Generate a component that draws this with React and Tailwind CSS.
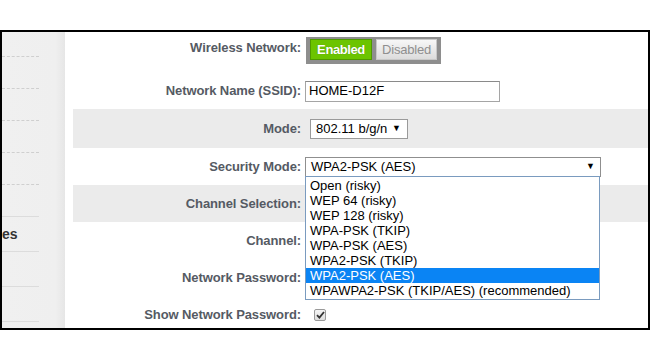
import React from "react";

const OPTIONS = [
  "Open (risky)",
  "WEP 64 (risky)",
  "WEP 128 (risky)",
  "WPA-PSK (TKIP)",
  "WPA-PSK (AES)",
  "WPA2-PSK (TKIP)",
  "WPA2-PSK (AES)",
  "WPAWPA2-PSK (TKIP/AES) (recommended)",
];

const Row = ({ label, gray, h, children, align = "items-center" }) => (
  <div className={`flex ${align} shrink-0 ${gray ? "bg-[#ebebeb]" : ""}`} style={{ height: h }}>
    <div className="w-[228px] shrink-0 text-right text-[13px] font-bold tracking-[-0.1px] text-[#555a63]">
      {label}
    </div>
    {children}
  </div>
);

const Arrow = () => <span className="text-[9px] text-black leading-none">▼</span>;

export default function App() {
  return (
    <div className="w-[650px] h-[360px] bg-white pt-[30px] font-['Liberation_Sans',Arial,sans-serif]">
      <div className="h-[300px] border-2 border-black flex overflow-hidden">
        {/* Sidebar */}
        <div className="w-[63px] shrink-0 bg-gradient-to-r from-[#f0f0f0] via-[#efefef] via-85% to-[#e6e6e6] flex flex-col">
          <div className="h-[25px] shrink-0 border-b border-dashed border-[#cfcfcf] w-[37px]" />
          <div className="h-[32px] shrink-0 border-b border-dashed border-[#cfcfcf] w-[37px]" />
          <div className="h-[32px] shrink-0 border-b border-dashed border-[#cfcfcf] w-[37px]" />
          <div className="h-[32px] shrink-0 border-b border-dashed border-[#cfcfcf] w-[37px]" />
          <div className="h-[32px] shrink-0 border-b border-dashed border-[#cfcfcf] w-[37px]" />
          <div className="h-[32px] shrink-0 border-b border-[#dcdcdc] w-[37px]" />
          <div className="h-[35px] shrink-0 border-b border-[#dcdcdc] w-[37px] flex items-center">
            <span className="text-[14px] font-bold text-[#333]">es</span>
          </div>
          <div className="h-[35px] shrink-0 border-b border-[#dcdcdc] w-[37px]" />
          <div className="h-[35px] shrink-0 border-b border-[#dcdcdc] w-[37px]" />
        </div>

        {/* Main */}
        <div className="flex-1 pl-[8px] flex flex-col bg-white">
          <Row label="Wireless Network:" h={40} align="items-start pt-[6px]">
            <div className="ml-[5px] flex gap-[4px] bg-[#8e8e8e] pl-[4px] pr-[4px] pt-[2px] pb-[4px] -mt-[1px]">
              <div className="w-[62px] h-[21px] bg-[#6cc400] border border-[#4f9a00] flex items-center justify-center text-white text-[13px] font-bold tracking-[-0.4px] [text-shadow:0_0_1px_rgba(0,0,0,0.3)]">
                Enabled
              </div>
              <div className="w-[61px] h-[21px] bg-gradient-to-b from-[#f7f7f7] to-[#dcdcdc] border border-[#c8c8c8] flex items-center justify-center text-[#8f8f8f] text-[13px] tracking-[-0.2px]">
                Disabled
              </div>
            </div>
          </Row>

          <Row label="Network Name (SSID):" h={37}>
            <div className="ml-[4px] w-[195px] h-[21px] border border-[#a5a5a5] border-t-[#8a8a8a] bg-white flex items-center pl-[3px] text-[13px] text-black mt-[1px]">
              HOME-D12F
            </div>
          </Row>

          <Row label="Mode:" gray h={39}>
            <div className="ml-[9px] w-[98px] h-[20px] border border-[#9a9a9a] bg-white flex items-center justify-between pl-[5px] pr-[6px] text-[13px] text-black">
              <span>802.11 b/g/n</span>
              <Arrow />
            </div>
          </Row>

          <Row label="Security Mode:" h={37}>
            <div className="relative ml-[4px]">
              <div className="w-[296px] h-[20px] border border-[#8f8f8f] bg-white flex items-center justify-between pl-[5px] pr-[5px] text-[13px] text-black">
                <span>WPA2-PSK (AES)</span>
                <Arrow />
              </div>
              <div className="absolute left-0 top-[19px] w-[295px] border border-[#7a9bbf] bg-white py-[1px] z-10">
                {OPTIONS.map((o, i) => (
                  <div
                    key={o}
                    className={`h-[15px] leading-[15px] pl-[4px] text-[13px] ${
                      i === 6 ? "bg-[#0a84f4] text-white" : "text-black"
                    }`}
                  >
                    {o}
                  </div>
                ))}
              </div>
            </div>
          </Row>

          <Row label="Channel Selection:" gray h={37} />
          <Row label="Channel:" h={37} />
          <Row label="Network Password:" h={37} />

          <Row label="Show Network Password:" h={37}>
            <div className="ml-[13px] w-[12px] h-[12px] border border-[#9a9a9a] rounded-[2px] bg-gradient-to-b from-[#f4f4f4] to-[#dedede] flex items-center justify-center">
              <svg width="9" height="8" viewBox="0 0 9 8">
                <path d="M1 4.2 L3.4 6.6 L8 1" fill="none" stroke="#333" strokeWidth="1.8" />
              </svg>
            </div>
          </Row>
        </div>
      </div>
    </div>
  );
}
